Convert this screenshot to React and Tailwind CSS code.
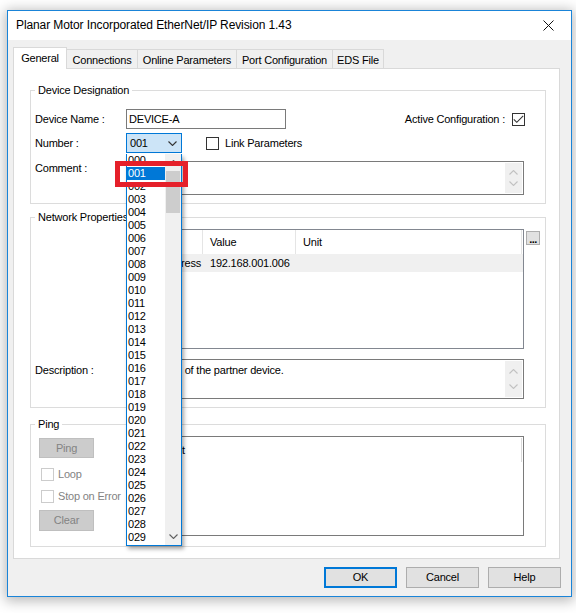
import React from "react";

const numbers = Array.from({ length: 30 }, (_, i) => String(i).padStart(3, "0"));

function Chevron({ up, color }) {
  return (
    <svg width="9" height="5" viewBox="0 0 9 5">
      <path
        d={up ? "M0.5 4.5 L4.5 0.5 L8.5 4.5" : "M0.5 0.5 L4.5 4.5 L8.5 0.5"}
        fill="none"
        stroke={color}
        strokeWidth="1.1"
      />
    </svg>
  );
}

function CheckBox({ checked, disabled }) {
  return (
    <span
      className={`flex h-[13px] w-[13px] shrink-0 items-center justify-center border bg-white ${
        disabled ? "border-[#cccccc]" : "border-[#333333]"
      }`}
    >
      {checked && (
        <svg width="11" height="9" viewBox="0 0 11 9">
          <path d="M0.8 4.3 L3.8 7.3 L10.2 0.9" fill="none" stroke="#333333" strokeWidth="1.1" />
        </svg>
      )}
    </span>
  );
}

function ScrollArrows({ className }) {
  return (
    <div className={`flex w-[17px] flex-col items-center justify-between bg-[#f0f0f0] ${className}`}>
      <Chevron up color="#c2c2c2" />
      <Chevron color="#c2c2c2" />
    </div>
  );
}

function GroupBox({ title, className, children }) {
  return (
    <div className={`ml-[16px] w-[516px] border border-[#dcdcdc] ${className}`}>
      <div className="-mt-[7px] ml-[4px] w-fit bg-white px-[3px]">{title}</div>
      {children}
    </div>
  );
}

const tabs = [
  { name: "Connections", w: "w-[71px]" },
  { name: "Online Parameters", w: "w-[99px]" },
  { name: "Port Configuration", w: "w-[96px]" },
  { name: "EDS File", w: "w-[51px]" },
];

export default function App() {
  return (
    <div className="relative h-[613px] w-[576px] overflow-hidden bg-white font-['Liberation_Sans',Arial,sans-serif] text-[11px] leading-[13px] tracking-[-0.2px] text-black">
      <div className="ml-[7px] mt-[10px] flex h-[587px] w-[565px] flex-col border border-[#1a84d8] bg-[#f0f0f0] shadow-[0_2px_12px_2px_rgba(0,0,0,0.28)]">
        {/* title bar */}
        <div className="flex h-[29px] items-center bg-white">
          <span className="pl-[8px] text-[12px] tracking-[-0.1px]">
            Planar Motor Incorporated EtherNet/IP Revision 1.43
          </span>
          <div className="ml-auto flex h-[29px] w-[46px] items-center justify-center">
            <svg width="11" height="11" viewBox="0 0 11 11">
              <path d="M0.5 0.5 L10.5 10.5 M10.5 0.5 L0.5 10.5" stroke="#111111" strokeWidth="1" />
            </svg>
          </div>
        </div>

        {/* tabs */}
        <div className="ml-[5px] mt-[7px] flex h-[21px] items-end">
          <div className="relative z-10 -mb-[1px] flex h-[22px] w-[54px] items-start justify-center border-x border-t border-[#d9d9d9] bg-white pt-[4px]">
            General
          </div>
          {tabs.map((t) => (
            <div
              key={t.name}
              className={`flex h-[19px] items-center justify-center border-r border-t border-[#d9d9d9] bg-[#f0f0f0] pt-[2px] ${t.w}`}
            >
              {t.name}
            </div>
          ))}
        </div>

        {/* tab page */}
        <div className="ml-[5px] h-[491px] w-[547px] border border-[#d9d9d9] bg-white">
          <GroupBox title="Device Designation" className="mt-[21px] h-[114px]">
            <div className="mt-[12px] flex h-[20px] items-center">
              <div className="w-[95px] pl-[4px]">Device Name :</div>
              <div className="flex h-[20px] w-[160px] items-center border border-[#7a7a7a] bg-white pl-[2px]">
                DEVICE-A
              </div>
              <div className="ml-auto mr-[20px] flex items-center gap-[7px]">
                <span>Active Configuration :</span>
                <CheckBox checked />
              </div>
            </div>
            <div className="mt-[4px] flex h-[20px] items-center">
              <div className="w-[95px] pl-[4px]">Number :</div>
              <div className="flex h-[20px] w-[56px] items-center justify-between border border-[#0078d7] bg-[#cce4f7] pl-[3px] pr-[4px]">
                <span>001</span>
                <Chevron color="#333333" />
              </div>
              <div className="ml-[24px]">
                <CheckBox />
              </div>
              <span className="ml-[6px]">Link Parameters</span>
            </div>
            <div className="mt-[8px] flex h-[34px] items-start">
              <div className="w-[95px] pl-[4px] pt-[1px]">Comment :</div>
              <div className="flex h-[34px] w-[398px] justify-end border border-[#7a7a7a] bg-white p-[1px]">
                <ScrollArrows className="py-[7px]" />
              </div>
            </div>
          </GroupBox>

          <GroupBox title="Network Properties" className="mt-[13px] h-[191px]">
            <div className="mt-[5px] flex items-start">
              <div className="ml-[95px] h-[120px] w-[398px] border border-[#828790] bg-white">
                <div className="flex h-[24px]">
                  <div className="h-full w-[76px] border-r border-[#e5e5e5]" />
                  <div className="flex h-full w-[93px] items-center border-r border-[#e5e5e5] pl-[7px]">
                    Value
                  </div>
                  <div className="flex h-full w-[226px] items-center border-r border-[#e5e5e5] pl-[7px]">
                    Unit
                  </div>
                </div>
                <div className="flex h-[18px] w-[396px] items-center bg-[#f0f0f0]">
                  <div className="w-[76px] pr-[2px] text-right">IP Address</div>
                  <div className="pl-[7px]">192.168.001.006</div>
                </div>
              </div>
              <div className="ml-[2px] mt-[2px] flex h-[14px] w-[14px] items-end justify-center border border-[#adadad] bg-[#e1e1e1] pb-[1px] text-[11px] font-bold leading-[8px] tracking-[-0.5px]">
                ...
              </div>
            </div>
            <div className="mt-[10px] flex items-start">
              <div className="w-[95px] pl-[4px] pt-[5px]">Description :</div>
              <div className="flex h-[40px] w-[398px] border border-[#7a7a7a] bg-white p-[1px]">
                <div className="flex-1 pl-[1px] pt-[3px]">Description of the partner device.</div>
                <ScrollArrows className="py-[8px]" />
              </div>
            </div>
          </GroupBox>

          <GroupBox title="Ping" className="mt-[16px] h-[123px]">
            <div className="flex items-start">
              <div className="flex w-[95px] flex-col text-[#838383]">
                <div className="ml-[8px] mt-[7px] flex h-[20px] w-[55px] items-center justify-center border border-[#bfbfbf] bg-[#cccccc]">
                  Ping
                </div>
                <div className="ml-[10px] mt-[10px] flex items-center gap-[4px]">
                  <CheckBox disabled />
                  <span>Loop</span>
                </div>
                <div className="ml-[10px] mt-[9px] flex items-center gap-[4px]">
                  <CheckBox disabled />
                  <span className="whitespace-nowrap">Stop on Error</span>
                </div>
                <div className="ml-[8px] mt-[7px] flex h-[21px] w-[55px] items-center justify-center border border-[#bfbfbf] bg-[#cccccc]">
                  Clear
                </div>
              </div>
              <div className="mt-[5px] flex h-[100px] w-[398px] border border-[#7a7a7a] bg-white">
                <div className="flex-1 pl-[28px] pt-[7px]">Result</div>
                <div className="mr-[1px] mt-[1px] h-[24px] w-[1px] bg-[#dadada]" />
              </div>
            </div>
          </GroupBox>
        </div>

        {/* dialog buttons */}
        <div className="mt-[8px] flex justify-end gap-[9px] pr-[10px]">
          <div className="flex h-[21px] w-[73px] items-center justify-center border-2 border-[#0078d7] bg-[#e1e1e1]">
            OK
          </div>
          <div className="flex h-[21px] w-[73px] items-center justify-center border border-[#adadad] bg-[#e1e1e1]">
            Cancel
          </div>
          <div className="flex h-[21px] w-[73px] items-center justify-center border border-[#adadad] bg-[#e1e1e1]">
            Help
          </div>
        </div>
      </div>

      {/* open combo list */}
      <div className="absolute left-[126px] top-[154px] flex h-[392px] w-[56px] overflow-hidden border-x border-b border-[#0078d7] bg-white shadow-[2px_3px_4px_rgba(0,0,0,0.35)]">
        <div className="w-[38px]">
          {numbers.map((n) => (
            <div
              key={n}
              className={`flex h-[13px] items-center pl-[1px] ${n === "001" ? "bg-[#0078d7] text-white" : ""}`}
            >
              {n}
            </div>
          ))}
        </div>
        <div className="flex w-[16px] flex-col bg-[#f0f0f0]">
          <div className="flex h-[17px] items-center justify-center">
            <Chevron up color="#606060" />
          </div>
          <div className="mx-[1px] h-[42px] bg-[#cdcdcd]" />
          <div className="mt-auto flex h-[17px] items-center justify-center">
            <Chevron color="#606060" />
          </div>
        </div>
      </div>

      {/* red highlight */}
      <div className="absolute left-[115px] top-[161px] h-[26px] w-[73px] border-[5px] border-[#e5202a]" />
    </div>
  );
}
